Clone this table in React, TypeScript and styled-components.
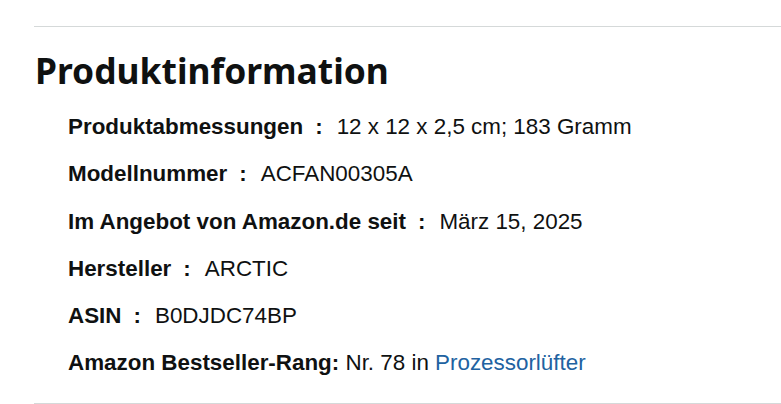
import React from 'react';
import styled, { createGlobalStyle } from 'styled-components';

const GlobalStyle = createGlobalStyle`
  html, body {
    margin: 0;
    padding: 0;
    background: #fff;
  }
  body {
    font-family: "Liberation Sans", Arial, sans-serif;
    color: #0f1111;
  }
`;

const Section = styled.section`
  padding: 26px 0 0 34px;
`;

const Divider = styled.hr`
  border: 0;
  border-top: 1px solid #d5d9d9;
  margin: 0;
  height: 0;
`;

const Heading = styled.h2`
  margin: 0;
  padding: 22px 0 22px 1px;
  font-family: "Noto Sans", "Open Sans", sans-serif;
  font-weight: 700;
  font-size: 35.4px;
  line-height: 42px;
  color: #0f1111;
`;

const List = styled.ul`
  list-style: none;
  margin: 0 0 0 34px;
  padding: 0 0 26px;
  display: flex;
  flex-direction: column;
  gap: 19.3px;
`;

const Item = styled.li`
  font-size: 22.4px;
  line-height: 28px;
  white-space: nowrap;
`;

const Label = styled.span`
  font-weight: 700;
`;

const Sep = styled.span`
  font-weight: 700;
  margin: 0 14px 0 12px;
`;

const Link = styled.a`
  color: #2162a1;
  text-decoration: none;
`;

const rows: [string, string][] = [
  ['Produktabmessungen', '12 x 12 x 2,5 cm; 183 Gramm'],
  ['Modellnummer', 'ACFAN00305A'],
  ['Im Angebot von Amazon.de seit', 'März 15, 2025'],
  ['Hersteller', 'ARCTIC'],
  ['ASIN', 'B0DJDC74BP'],
];

export default function App() {
  return (
    <>
      <GlobalStyle />
      <Section>
        <Divider />
        <Heading>Produktinformation</Heading>
        <List>
          {rows.map(([label, value]) => (
            <Item key={label}>
              <Label>{label}</Label>
              <Sep>:</Sep>
              <span>{value}</span>
            </Item>
          ))}
          <Item>
            <Label>Amazon Bestseller-Rang:</Label> Nr. 78 in <Link href="#">Prozessorlüfter</Link>
          </Item>
        </List>
        <Divider />
      </Section>
    </>
  );
}
